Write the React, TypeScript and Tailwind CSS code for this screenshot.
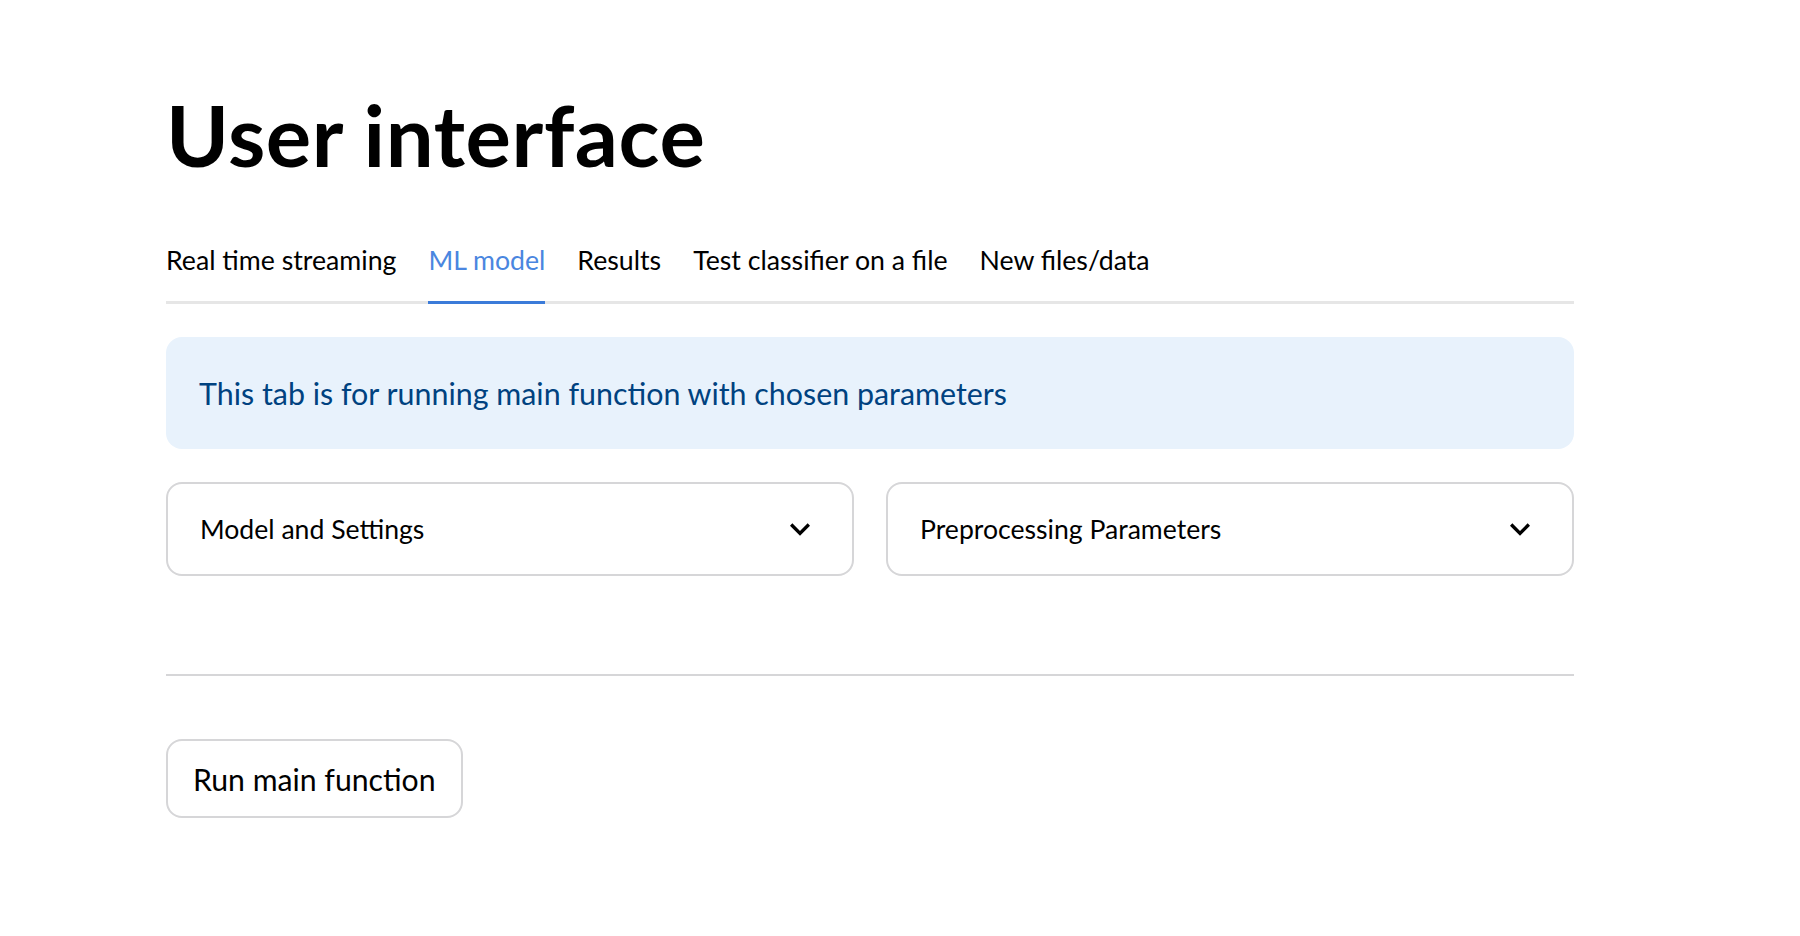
import { useState } from "react";

const tabs = ["Real time streaming", "ML model", "Results", "Test classifier on a file", "New files/data"];

function Chevron() {
  return (
    <svg width="40" height="40" viewBox="0 0 24 24" className="shrink-0">
      <path d="M16.59 8.59L12 13.17 7.41 8.59 6 10l6 6 6-6z" fill="#000" />
    </svg>
  );
}

function Expander({ label }: { label: string }) {
  return (
    <div className="flex h-[94px] items-center justify-between rounded-[16px] border-2 border-[#d6d6d8] px-[32px]">
      <span className="text-[26.6px] leading-[40px] text-black">{label}</span>
      <Chevron />
    </div>
  );
}

export default function App() {
  const [active, setActive] = useState("ML model");

  return (
    <main className="min-h-screen bg-white font-['Lato',sans-serif] text-black">
      <div className="ml-[166px] w-[1408px] pt-[84px]">
        <h1 className="text-[85px] font-bold leading-[100px] tracking-[0.6px]">User interface</h1>

        {/* Tabs */}
        <div className="mt-[56px] flex gap-[32px] border-b-[3px] border-[#e6e6e6]">
          {tabs.map(t => (
            <button
              key={t}
              onClick={() => setActive(t)}
              className={`-mb-[3px] border-b-[3px] pb-[21px] text-[26.7px] leading-[40px] ${
                active === t ? "border-[#3b7bd9] text-[#4a86e0]" : "border-transparent text-black"
              }`}
            >
              {t}
            </button>
          ))}
        </div>

        {/* Info */}
        <div className="mt-[33px] rounded-[16px] bg-[#e8f2fc] py-[32px] pl-[33px] pr-[32px] text-[30.4px] leading-[48px] text-[#004280]">
          This tab is for running main function with chosen parameters
        </div>

        <div className="mt-[33px] grid grid-cols-2 gap-[32px]">
          <Expander label="Model and Settings" />
          <Expander label="Preprocessing Parameters" />
        </div>

        <hr className="mt-[98px] border-t-2 border-[#d6d6d8]" />

        <button className="mt-[63px] flex h-[79px] items-center rounded-[16px] border-2 border-[#d6d6d8] bg-white px-[25px] text-[30.2px] leading-[48px] text-black">
          Run main function
        </button>
      </div>
    </main>
  );
}
